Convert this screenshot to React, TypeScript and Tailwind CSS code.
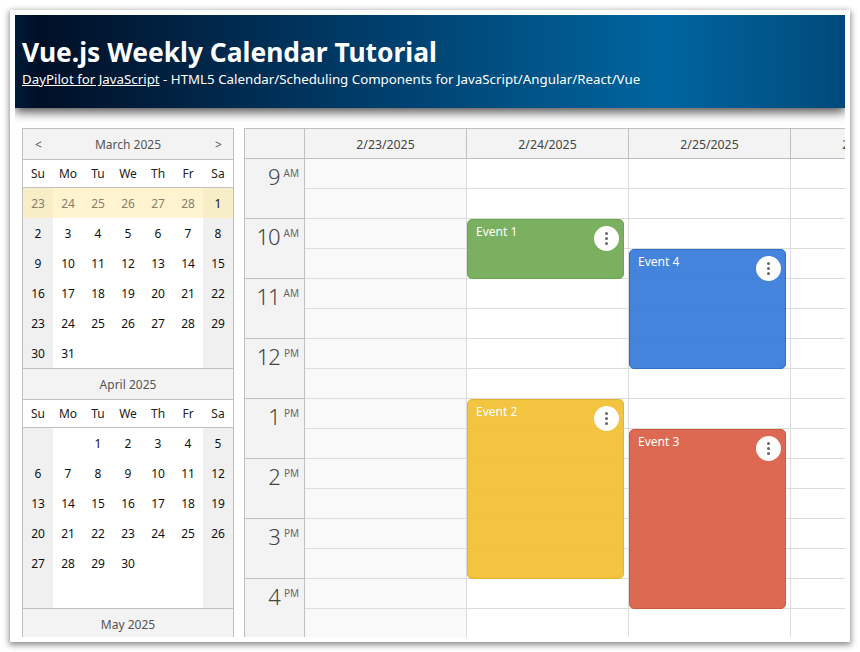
import React from "react";

const font = "font-['Noto_Sans',sans-serif]";
const dows = ["Su", "Mo", "Tu", "We", "Th", "Fr", "Sa"];

const march = [
  [23, 24, 25, 26, 27, 28, 1],
  [2, 3, 4, 5, 6, 7, 8],
  [9, 10, 11, 12, 13, 14, 15],
  [16, 17, 18, 19, 20, 21, 22],
  [23, 24, 25, 26, 27, 28, 29],
  [30, 31, 0, 0, 0, 0, 0],
];

const april = [
  [0, 0, 1, 2, 3, 4, 5],
  [6, 7, 8, 9, 10, 11, 12],
  [13, 14, 15, 16, 17, 18, 19],
  [20, 21, 22, 23, 24, 25, 26],
  [27, 28, 29, 30, 0, 0, 0],
  [0, 0, 0, 0, 0, 0, 0],
];

const hours = [
  ["9", "AM"],
  ["10", "AM"],
  ["11", "AM"],
  ["12", "PM"],
  ["1", "PM"],
  ["2", "PM"],
  ["3", "PM"],
  ["4", "PM"],
];

const Month = ({
  title,
  weeks,
  nav,
  highlight,
}: {
  title: string;
  weeks: number[][];
  nav?: boolean;
  highlight?: boolean;
}) => {
  return (
    <div>
      <div className="flex h-[31px] items-center justify-between border-b border-[#c0c0c0] bg-[#f3f3f3] pl-[12px] pr-[14px] pt-[2px] text-[12px] text-[#555]">
        <span className="w-[6px]">{nav ? "<" : ""}</span>
        <span>{title}</span>
        <span className="w-[4px]">{nav ? ">" : ""}</span>
      </div>
      <div className="grid h-[28px] grid-cols-[repeat(7,30px)] items-center border-b border-[#c0c0c0] bg-white pt-[1px] text-center text-[12px] text-[#222]">
        {dows.map((d) => (
          <div key={d}>{d}</div>
        ))}
      </div>
      <div className="grid grid-cols-[repeat(7,30px)] text-center text-[12px] text-[#111]">
        {weeks.map((week, w) =>
          week.map((day, i) => {
            const weekend = i === 0 || i === 6;
            const other = highlight && w === 0;
            let bg = weekend ? "bg-[#f0f0f0]" : "bg-white";
            if (other) bg = weekend ? "bg-[#f7edc7]" : "bg-[#fff4cf]";
            return (
              <div
                key={w + "-" + i}
                className={`flex h-[30px] items-center justify-center pt-[2px] ${bg} ${
                  other && day > 1 ? "text-[#85806e]" : ""
                }`}
              >
                {day > 0 ? day : ""}
              </div>
            );
          }),
        )}
      </div>
    </div>
  );
};

const EventBox = ({
  name,
  top,
  height,
  colors,
}: {
  name: string;
  top: number;
  height: number;
  colors: string;
}) => {
  return (
    <div
      className={`absolute left-0 w-[157px] rounded-[5px] border px-[8px] pt-[3px] text-[12px] text-white ${colors}`}
      style={{ top, height }}
    >
      {name}
      <div className="absolute right-[4px] top-[6px] flex h-[25px] w-[25px] flex-col items-center justify-center gap-[2px] rounded-full bg-white">
        <span className="h-[3px] w-[3px] rounded-full bg-[#666]" />
        <span className="h-[3px] w-[3px] rounded-full bg-[#666]" />
        <span className="h-[3px] w-[3px] rounded-full bg-[#666]" />
      </div>
    </div>
  );
};

const DayColumn = ({
  shaded,
  children,
}: {
  shaded?: boolean;
  children?: React.ReactNode;
}) => {
  return (
    <div className="relative w-[162px] shrink-0 border-r border-[#dcdcdc]">
      {Array.from({ length: 16 }).map((_, i) => (
        <div
          key={i}
          className={`h-[30px] border-b border-[#dcdcdc] ${shaded ? "bg-[#f9f9f9]" : "bg-white"}`}
        />
      ))}
      {children}
    </div>
  );
};

const App = () => {
  return (
    <div className={`h-[652px] w-[860px] overflow-hidden bg-white p-[10px] ${font}`}>
      <div className="h-[632px] overflow-hidden bg-white p-[5px] shadow-[0_2px_6px_1px_rgba(0,0,0,0.45)]">
        <div className="h-[622px] overflow-hidden">
          <div className="flex h-[93px] flex-col bg-[linear-gradient(90deg,#001a36_0%,#000f26_3%,#003a66_40%,#00659f_78%,#004a7b_100%)] px-[7px] pt-[19px] text-white shadow-[0_4px_10px_rgba(0,0,0,0.7)]">
            <h1 className="text-[26.4px] font-bold leading-[36px]">Vue.js Weekly Calendar Tutorial</h1>
            <div className="text-[13.3px] leading-[18px]">
              <a className="underline">DayPilot for JavaScript</a> - HTML5 Calendar/Scheduling Components for
              JavaScript/Angular/React/Vue
            </div>
          </div>
          <div className="mt-[20px] flex gap-[10px] pl-[7px]">
            <div className="h-[520px] w-[212px] shrink-0 overflow-hidden border-x border-t border-[#c0c0c0]">
              <Month title="March 2025" weeks={march} nav highlight />
              <div className="border-t border-[#c0c0c0]">
                <Month title="April 2025" weeks={april} />
              </div>
              <div className="border-t border-[#c0c0c0]">
                <div className="flex h-[31px] items-center justify-center bg-[#f3f3f3] pt-[1px] text-[12px] text-[#555]">
                  May 2025
                </div>
              </div>
            </div>
            <div className="h-[509px] min-w-0 flex-1 overflow-hidden border-l border-t border-[#c0c0c0]">
              <div className="flex h-[30px] border-b border-[#c0c0c0] bg-[#f3f3f3] text-[12.3px] text-[#444]">
                <div className="w-[60px] shrink-0 border-r border-[#c0c0c0]" />
                {["2/23/2025", "2/24/2025", "2/25/2025", "2/26/2025"].map((d) => (
                  <div key={d} className="flex w-[162px] shrink-0 items-center justify-center border-r border-[#c0c0c0] pt-[3px]">
                    {d}
                  </div>
                ))}
              </div>
              <div className="flex">
                <div className="w-[60px] shrink-0 border-r border-[#c0c0c0] bg-[#f3f3f3] text-[#444]">
                  {hours.map(([h, m]) => (
                    <div key={h} className="flex h-[60px] items-start justify-end border-b border-[#c0c0c0] pr-[5px] pt-[2px]">
                      <span className="text-[22px] font-light leading-[30px] tracking-[-1px]">{h}</span>
                      <span className="ml-[4px] mt-[6px] text-[10px] leading-[12px] text-[#666]">{m}</span>
                    </div>
                  ))}
                </div>
                <DayColumn shaded />
                <DayColumn>
                  <EventBox name="Event 1" top={60} height={60} colors="border-[#6aa84f] bg-[#6ba74e]/90" />
                  <EventBox name="Event 2" top={240} height={180} colors="border-[#e5b52f] bg-[#f2be2b]/90" />
                </DayColumn>
                <DayColumn>
                  <EventBox name="Event 4" top={90} height={120} colors="border-[#2e6fc4] bg-[#3077d8]/90" />
                  <EventBox name="Event 3" top={270} height={180} colors="border-[#cc5a3c] bg-[#da593f]/90" />
                </DayColumn>
                <DayColumn />
              </div>
            </div>
          </div>
        </div>
      </div>
    </div>
  );
};

export default App;
